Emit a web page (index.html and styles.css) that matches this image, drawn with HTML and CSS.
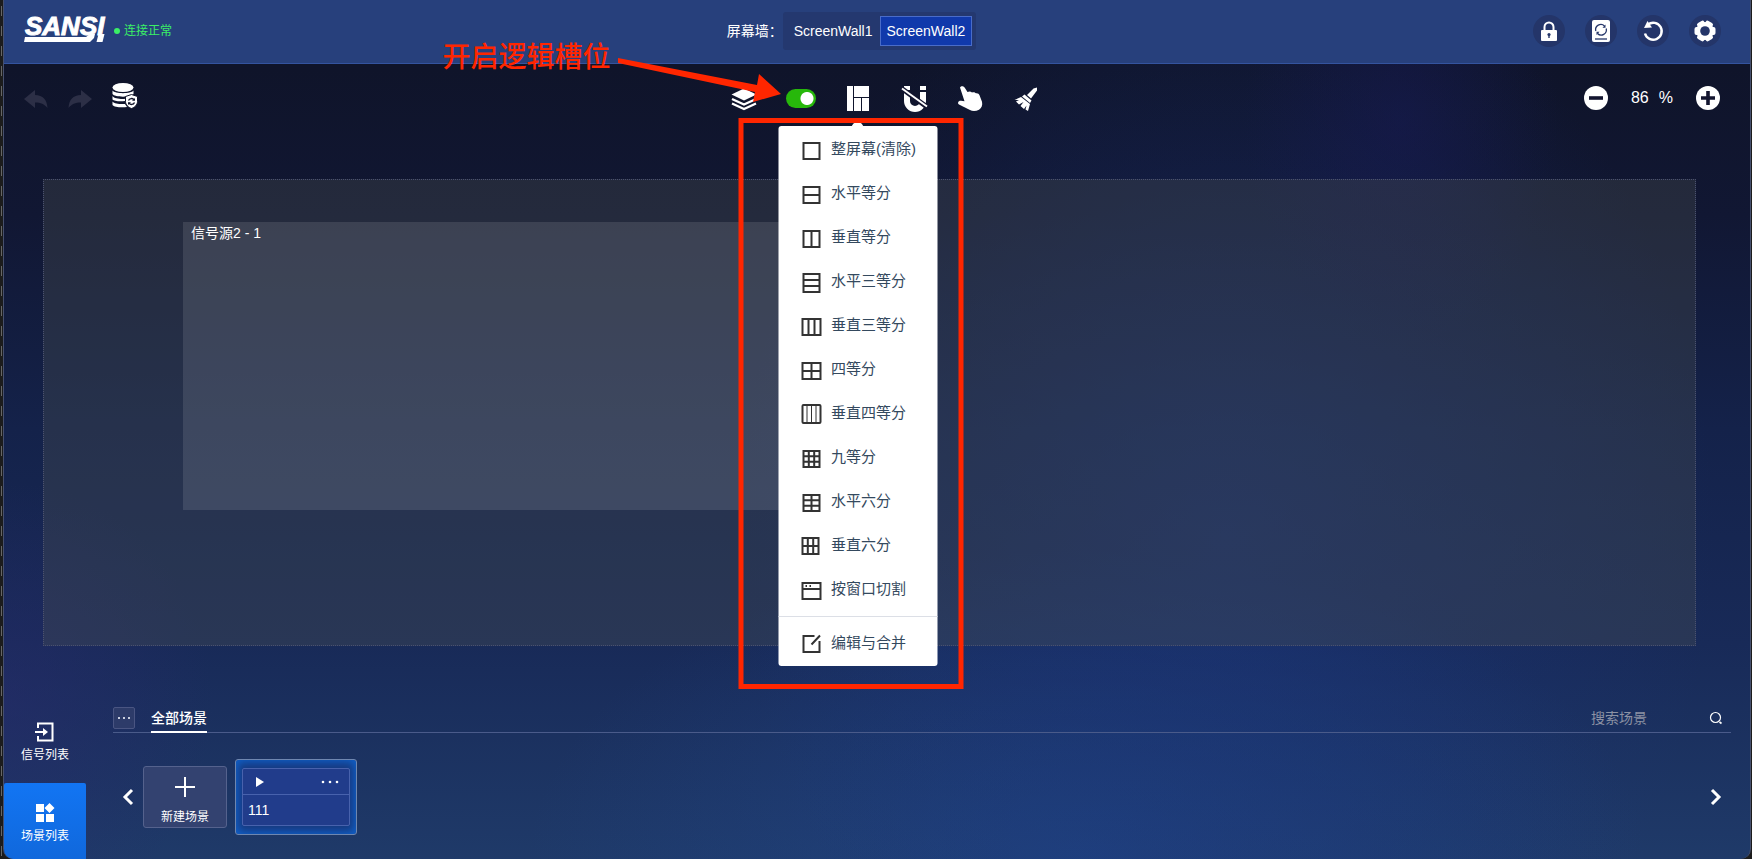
FILE: index.html
```
<!DOCTYPE html>
<html lang="zh-CN">
<head>
  <meta charset="UTF-8">
  <title>SANSI</title>
  <link rel="stylesheet" href="styles.css">
</head>
<body>
<div class="window">

  <header class="header">
    <div class="brand">
      <svg class="logo" viewBox="0 0 84 26" role="img" aria-label="SANSI">
        <text class="logo-text" x="1" y="19">SANSI</text>
        <path d="M1 21H62L66 18H71L70 22L66 26H0ZM74.500 18H80.500L78.500 26H72.500Z" fill="#fff"/>
      </svg>
      <span class="status">连接正常</span>
    </div>
    <div class="walls">
      <span>屏幕墙：</span>
      <div class="wall-group">
        <button class="wall">ScreenWall1</button>
        <button class="wall active">ScreenWall2</button>
      </div>
    </div>
    <div class="header-actions">
      <button class="round" aria-label="锁定">
        <svg viewBox="0 0 32 32"><path d="M11.500 16v-4a4.500 4.500 0 0 1 9 0v4" fill="none" stroke="#fff" stroke-width="2"/><rect x="8" y="15" width="16" height="11" rx="1" fill="#fff"/><circle cx="16" cy="19.500" r="1.600" fill="#243569"/><path d="M15.300 20h1.400v3h-1.400z" fill="#243569"/></svg>
      </button>
      <button class="round" aria-label="设备">
        <svg viewBox="0 0 32 32"><rect x="7" y="5" width="18" height="22" rx="2" fill="#fff"/><path d="M10 24h12" stroke="#243569" stroke-width="1.300"/><path d="M10.800 16a5.200 5.200 0 0 1 8.700-5M21.200 13.500a5.200 5.200 0 0 1-8.700 5" fill="none" stroke="#243569" stroke-width="1.300"/><path d="M20.500 9.500v3.200h-3zM11.500 20v-3.200h3z" fill="#243569"/></svg>
      </button>
      <button class="round" aria-label="重启">
        <svg viewBox="0 0 32 32"><path d="M11 9.500a8.500 8.500 0 1 1-3 9" fill="none" stroke="#fff" stroke-width="2.400"/><path d="M7 13L10.500 6L15 12.500Z" fill="#fff"/></svg>
      </button>
      <button class="round" aria-label="设置">
        <svg viewBox="0 0 32 32"><circle cx="16" cy="16" r="6.500" fill="none" stroke="#fff" stroke-width="5"/><g fill="#fff"><rect x="5.500" y="12" width="21" height="8" rx="2"/><rect x="5.500" y="12" width="21" height="8" rx="2" transform="rotate(60 16 16)"/><rect x="5.500" y="12" width="21" height="8" rx="2" transform="rotate(120 16 16)"/></g><circle cx="16" cy="16" r="4.800" fill="#243569"/></svg>
      </button>
    </div>
  </header>

  <div class="toolbar">
    <div class="history">
      <button class="icon-btn" aria-label="撤销" disabled>
        <svg viewBox="0 0 24 24" width="24" height="24"><path d="M0 13L11 4v5c8 0 12 5 12.500 13C20 18 17 16.500 11 16.500V22Z"/></svg>
      </button>
      <button class="icon-btn" aria-label="重做" disabled>
        <svg viewBox="0 0 24 24" width="24" height="24"><path d="M24 13L13 4v5C5 9 1 14 .5 22C4 18 7 16.500 13 16.500V22Z"/></svg>
      </button>
      <button class="icon-btn" aria-label="数据备份">
        <svg viewBox="0 0 26 28" width="26" height="28"><g fill="#fff"><ellipse cx="11" cy="5.500" rx="10.500" ry="4.500"/><path d="M.5 8.500c2 3.500 19 3.500 21 0v3.500c-2 3.500-19 3.500-21 0zM.5 14c2 3.500 12 3.200 15 2.500l-2.500 2.500c-4 .4-11 .5-12.500-1.500zM.5 19.500c2 2.500 8 2.800 12.500 2.500l2 3c-5 .8-13 .3-14.500-2z"/></g><path d="M19.500 12.500l6 2v5c0 3.500-3 6-6 7c-3-1-6-3.500-6-7v-5z" fill="#fff" stroke="#111429"/><path d="M16.500 18.500c1-2.500 4-2.500 5.500-.8M22.500 20.500c-1 2.500-4 2.500-5.500.8" fill="none" stroke="#111429" stroke-width="1.300"/><path d="M23 16v2.800h-3zM16 23v-2.800h3z" fill="#111429"/></svg>
      </button>
    </div>

    <div class="tools">
      <button class="tool" aria-label="图层">
        <svg viewBox="0 0 30 30"><path d="M15 5.500L27.500 11.500L15 17.500L2.500 11.500Z" fill="#fff"/><path d="M3 16l12 5.500L27 16M3 20.500L15 26l12-5.500" fill="none" stroke="#fff" stroke-width="2.300"/></svg>
      </button>
      <input class="switch" type="checkbox" checked aria-label="逻辑槽位">
      <div class="layout">
        <button class="tool" aria-label="布局">
          <svg viewBox="0 0 30 30" fill="#fff"><path d="M4 3h6v25H4zM11 3h15v11H11zM11 15h7v13h-7zM19 15h7v13h-7z"/></svg>
        </button>

        <div class="menu">
          <button class="menu-item"><svg viewBox="0 0 20 20"><path d="M2 2h16v16H2z"/></svg>整屏幕(清除)</button>
          <button class="menu-item"><svg viewBox="0 0 20 20"><path d="M2 2h16v16H2zM2 10h16"/></svg>水平等分</button>
          <button class="menu-item"><svg viewBox="0 0 20 20"><path d="M2 2h16v16H2zM10 2v16"/></svg>垂直等分</button>
          <button class="menu-item"><svg viewBox="0 0 20 20"><path d="M2 1h16v18H2zM2 7h16M2 13h16"/></svg>水平三等分</button>
          <button class="menu-item"><svg viewBox="0 0 20 20"><path d="M1 2h18v16H1zM7 2v16M13 2v16"/></svg>垂直三等分</button>
          <button class="menu-item"><svg viewBox="0 0 20 20"><path d="M1 2h18v16H1zM10 2v16M1 10h18"/></svg>四等分</button>
          <button class="menu-item"><svg viewBox="0 0 20 20"><rect x="1" y="0" width="18" height="18" rx="1"/><path class="thin" d="M5.500 0v18M10 0v18M14.500 0v18"/></svg>垂直四等分</button>
          <button class="menu-item"><svg viewBox="0 0 20 20"><path d="M2 2h16v16H2zM7.300 2v16M12.700 2v16M2 7.300h16M2 12.700h16"/></svg>九等分</button>
          <button class="menu-item"><svg viewBox="0 0 20 20"><path d="M2 2h16v16H2zM10 2v16M2 7.300h16M2 12.700h16"/></svg>水平六分</button>
          <button class="menu-item"><svg viewBox="0 0 20 20"><path d="M1 1h16v16H1zM6.300 1v16M11.700 1v16M1 9h16"/></svg>垂直六分</button>
          <button class="menu-item"><svg viewBox="0 0 20 20"><path d="M1 2h18v16H1zM1 8h18M4 5h1.500M8 5h1.500"/></svg>按窗口切割</button>
          <hr>
          <button class="menu-item"><svg viewBox="0 0 20 20"><path d="M13 1H2v16h16V6M10 9.500L18.500 .5"/></svg>编辑与合并</button>
          <div class="mark-box"></div>
        </div>
      </div>
      <button class="tool" aria-label="吸附">
        <svg viewBox="0 0 30 30"><path d="M7 9v9a8 8 0 0 0 16 0V9" fill="none" stroke="#fff" stroke-width="6"/><path d="M4 3h6v4H4zM20 3h6v4h-6z" fill="#fff"/><path d="M1 5L27 24" stroke="#13152f" stroke-width="5"/><path d="M2 5.500L27 23.500" stroke="#fff" stroke-width="2"/></svg>
      </button>
      <button class="tool" aria-label="触控">
        <svg viewBox="0 0 30 30"><path d="M3 4.500c1-2 4-1.500 4.800.3L10.500 9c2-1 3.500-.5 4.500.5c1.500-.8 3-.2 4 .8c1.500-.4 3 .5 3.500 2l2.500 6.500c.8 3.500-.5 6.500-3 8c-3 1.500-6.500 1.600-9 .3L2 21.500c-2-1.500-.5-4.200 2-3.800l3.500.5z" fill="#fff"/></svg>
      </button>
      <button class="tool" aria-label="清理">
        <svg viewBox="0 0 30 30" fill="#fff"><path d="M19.500 5.500l3.500-1v3l-6 8l-4-3.500zM10.500 11.500l7 6l-1.500 2.500L8 13.500zM7 14l9 7l-2 7l-2.500-1.500l1-4l-2.500 3.500L6.500 23l3-4L5 21.500L2 18.500l3-1.500H.5z"/></svg>
      </button>

      <p class="mark-text">开启逻辑槽位</p>
      <svg class="mark-arrow" viewBox="0 0 166 50" width="166" height="50"><path d="M1 3L1 8L138 37L136 47L164 39L142 19L140 30Z" fill="#ff2600"/></svg>
    </div>

    <div class="zoom">
      <button class="icon-btn" aria-label="缩小"><svg viewBox="0 0 24 24" width="24" height="24"><circle cx="12" cy="12" r="12" fill="#fff"/><path d="M5 12h14" stroke="#13152f" stroke-width="3.600"/></svg></button>
      <span class="zoom-value"><span>86</span><span>%</span></span>
      <button class="icon-btn" aria-label="放大"><svg viewBox="0 0 24 24" width="24" height="24"><circle cx="12" cy="12" r="12" fill="#fff"/><path d="M5 12h14M12 5v14" stroke="#13152f" stroke-width="3.600"/></svg></button>
    </div>
  </div>

  <main class="wall-canvas">
    <div class="source">信号源2 - 1</div>
  </main>

  <section class="dock">
    <nav class="dock-nav">
      <button class="nav-item">
        <svg viewBox="0 0 20 20"><path d="M3 6V1.500h14.500v17H3V14" fill="none" stroke="#fff" stroke-width="2"/><path d="M0 10h10" stroke="#fff" stroke-width="2"/><path d="M8 6l5 4l-5 4z" fill="#fff"/></svg>
        信号列表
      </button>
      <button class="nav-item active">
        <svg viewBox="0 0 20 20" fill="#fff"><path d="M1 1h8v8H1zM1 11h8v8H1zM11 11h8v8h-8zM14.500 0L19.500 5L14.500 10L9.500 5Z"/></svg>
        场景列表
      </button>
    </nav>

    <div class="scenes">
      <div class="scene-tabs">
        <button class="more" aria-label="更多"><svg viewBox="0 0 20 20" width="20" height="20" fill="#c9cede"><path d="M4 9h2v2H4zM9 9h2v2H9zM14 9h2v2h-2z"/></svg></button>
        <button class="tab">全部场景</button>
        <label class="search">
          <input type="text" placeholder="搜索场景" aria-label="搜索场景">
          <svg viewBox="0 0 14 14" width="14" height="14" fill="none" stroke="#fff"><circle cx="6.500" cy="6.500" r="5" stroke-width="1.200"/><path d="M10.500 11l2 1.500" stroke-width="1.600"/></svg>
        </label>
      </div>
      <div class="scene-list">
        <button class="arrow" aria-label="上一页"><svg viewBox="0 0 12 18" width="12" height="18"><path d="M10 2L3 9l7 7"/></svg></button>
        <button class="new-scene">
          <svg viewBox="0 0 20 20" width="20" height="20"><path d="M0 10h20M10 0v20" stroke="#fff" stroke-width="2"/></svg>
          新建场景
        </button>
        <div class="scene-card">
          <div class="scene-inner">
            <div class="scene-bar">
              <button class="icon-btn" aria-label="播放"><svg viewBox="0 0 8 10" width="8" height="10"><path d="M0 0L8 5L0 10Z" fill="#fff"/></svg></button>
              <button class="icon-btn" aria-label="场景操作"><svg viewBox="0 0 18 4" width="18" height="4" fill="#fff"><circle cx="2" cy="2" r="1.300"/><circle cx="9" cy="2" r="1.300"/><circle cx="16" cy="2" r="1.300"/></svg></button>
            </div>
            <div class="scene-name">111</div>
          </div>
        </div>
        <button class="arrow next" aria-label="下一页"><svg viewBox="0 0 12 18" width="12" height="18"><path d="M2 2l7 7l-7 7"/></svg></button>
      </div>
    </div>
  </section>

</div>
</body>
</html>
```
FILE: styles.css
```
* { box-sizing: border-box; }
body {
  margin: 0;
  font: 14px/20px "Liberation Sans", "Noto Sans CJK SC", sans-serif;
  color: #fff;
  background: repeating-linear-gradient(#666 0 10px, #1c1c1c 10px 20px) 1px 6px / 1px 100% no-repeat, #1c1c1c;
}
button, input { font: inherit; color: inherit; }
button { padding: 0; border: 0; background: none; }
svg { display: block; }

.window {
  display: flex;
  flex-direction: column;
  min-height: 100vh;
  margin: 0 1px 0 3px;
  border: solid #46506e;
  border-width: 0 1px;
  border-radius: 0 0 10px 10px;
  overflow: hidden;
  background:
    radial-gradient(ellipse 9% 26% at 80% 14%, rgba(24, 26, 88, .45), transparent),
    radial-gradient(ellipse 28% 70% at 70% 62%, rgba(26, 52, 124, .5), transparent),
    radial-gradient(ellipse 32% 36% at 62% 100%, rgba(32, 70, 140, .6), transparent),
    radial-gradient(ellipse 12% 26% at 0% 82%, rgba(40, 42, 108, .5), transparent),
    linear-gradient(#0f142a 8%, #111733 25%, #14224a 50%, #182a58 75%, #1f3a69 100%);
}

.header, .toolbar {
  display: grid;
  grid-template-columns: 1fr auto 1fr;
  align-items: center;
  padding: 0 29px 0 20px;
}
.header { height: 64px; padding-bottom: 1px; background: #27407c; border-bottom: 1px solid #34549f; }
.brand { display: flex; align-items: center; gap: 6px; }
.logo { width: 84px; height: 26px; margin-bottom: 5px; overflow: visible; }
.logo-text { font: italic bold 26px "Liberation Sans", sans-serif; fill: #fff; stroke: #fff; stroke-width: 1px; }
.status { display: flex; align-items: center; gap: 4px; font-size: 12px; color: #3bef66; }
.status::before { content: ""; width: 6px; height: 6px; border-radius: 50%; background: #3bef66; }
.walls { display: flex; align-items: center; margin-right: 42px; }
.wall-group { display: flex; padding: 4px; border-radius: 3px; background: #24386f; }
.wall { height: 30px; padding: 0 6px; border: 1px solid transparent; }
.wall.active { background: #1039ab; border-color: #496cc9; }
.header-actions { display: flex; justify-content: flex-end; gap: 20px; }
.round { width: 32px; height: 32px; border-radius: 50%; background: #243569; }

.toolbar { height: 68px; padding-right: 30px; }
.history { display: flex; align-items: center; gap: 20px; }
.history button:disabled { fill: #2c2f46; }
.history button:last-child { margin-bottom: 4px; }
.tools { position: relative; display: flex; align-items: center; gap: 27px; margin-left: 28px; }
.tool { display: block; width: 30px; height: 30px; }
.switch {
  appearance: none;
  width: 30px;
  height: 19px;
  margin: 0;
  border-radius: 10px;
  background: radial-gradient(circle at 21px 50%, #fff 6px, transparent 7px), #27b80b;
}
.zoom { display: flex; justify-content: flex-end; align-items: center; gap: 23px; font-size: 16px; }
.zoom-value { display: flex; gap: 10px; }

/* layout drop-down */
.layout { position: relative; }
.menu {
  position: absolute;
  z-index: 2;
  top: 43px;
  left: 50%;
  width: 159px;
  padding: 1px 0;
  transform: translateX(-50%);
  border-radius: 3px;
  background: #fff;
}
.menu::before {
  content: "";
  position: absolute;
  top: -4px;
  left: 50%;
  width: 12px;
  height: 12px;
  margin-left: -6px;
  border-radius: 50%;
  background: #fff;
}
.menu-item {
  position: relative;
  display: flex;
  align-items: center;
  gap: 10px;
  width: 100%;
  height: 44px;
  padding-left: 23px;
  font-size: 15px;
  color: #34495e;
}
.menu-item svg { width: 20px; height: 20px; margin-top: 3px; fill: none; stroke: #333; stroke-width: 2; overflow: visible; }
.menu-item .thin { stroke-width: 1; }
.menu hr { margin: 5px 0 4px; border: 0; border-top: 1px solid #dcdfe6; }

/* red annotations */
.mark-box { position: absolute; inset: -8px -26px -23px -40px; border: 5px solid #ff2600; pointer-events: none; }
.mark-text { position: absolute; top: -45px; left: -286px; margin: 0; font-size: 28px; line-height: 40px; font-weight: 500; color: #ff2600; white-space: nowrap; }
.mark-arrow { position: absolute; top: -28px; left: -112px; }

.wall-canvas {
  position: relative;
  flex: 1;
  margin: 47px 54px 0 39px;
  border: 1px dotted #4a5170;
  background: rgba(75, 83, 83, .33);
}
.source {
  position: absolute;
  top: 9%;
  left: 139px;
  width: 41%;
  height: 62%;
  padding: 1px 8px;
  background: rgba(255, 255, 255, .11);
}

.dock { display: flex; height: 163px; margin-top: 50px; }
.dock-nav { display: flex; flex-direction: column; justify-content: flex-end; width: 82px; font-size: 12px; }
.nav-item { display: flex; flex-direction: column; align-items: center; justify-content: center; gap: 4px; height: 76px; padding-top: 6px; line-height: 18px; }
.nav-item svg { width: 20px; height: 20px; }
.nav-item:first-child { margin-bottom: 5px; }
.nav-item.active { background: linear-gradient(#1275f3, #1068dc); border-radius: 2px 2px 0 0; }
.scenes { flex: 1; padding: 6px 19px 0 27px; }
.scene-tabs { display: flex; align-items: center; height: 31px; padding-top: 2px; border-bottom: 1px solid #4a5b8a; }
.more { width: 22px; height: 22px; border: 1px solid #4a5582; border-radius: 2px; background: #2d3b69; }
.tab { align-self: stretch; margin: 0 0 -1px 16px; border-bottom: 2px solid #fff; font-weight: 500; }
.search { display: flex; align-items: center; margin-left: auto; padding-right: 8px; }
.search input { width: 118px; padding: 0; border: 0; outline: 0; background: none; }
.search input::placeholder { color: #8c92a4; }
.scene-list { display: flex; align-items: center; gap: 8px; padding: 26px 9px 0; }
.arrow svg { fill: none; stroke: #fff; stroke-width: 3; }
.arrow.next { margin-left: auto; }
.new-scene {
  display: flex;
  flex-direction: column;
  align-items: center;
  justify-content: flex-end;
  gap: 10px;
  width: 84px;
  height: 62px;
  margin-left: 1px;
  border: 1px solid #55628d;
  border-radius: 3px;
  background: #334270;
  font-size: 12px;
}
.scene-card { width: 122px; height: 76px; padding: 8px 6px; border: 1px solid #6f87b0; border-radius: 3px; background: #173a80; box-shadow: inset 0 0 8px 2px #0f62cc; }
.scene-inner { height: 58px; border: 1px solid #4862ad; border-radius: 2px; background: #213c8b; }
.scene-bar { display: flex; justify-content: space-between; align-items: center; height: 26px; padding: 0 10px 0 13px; border-bottom: 1px solid #4862ad; }
.scene-name { padding: 5px; }
```
